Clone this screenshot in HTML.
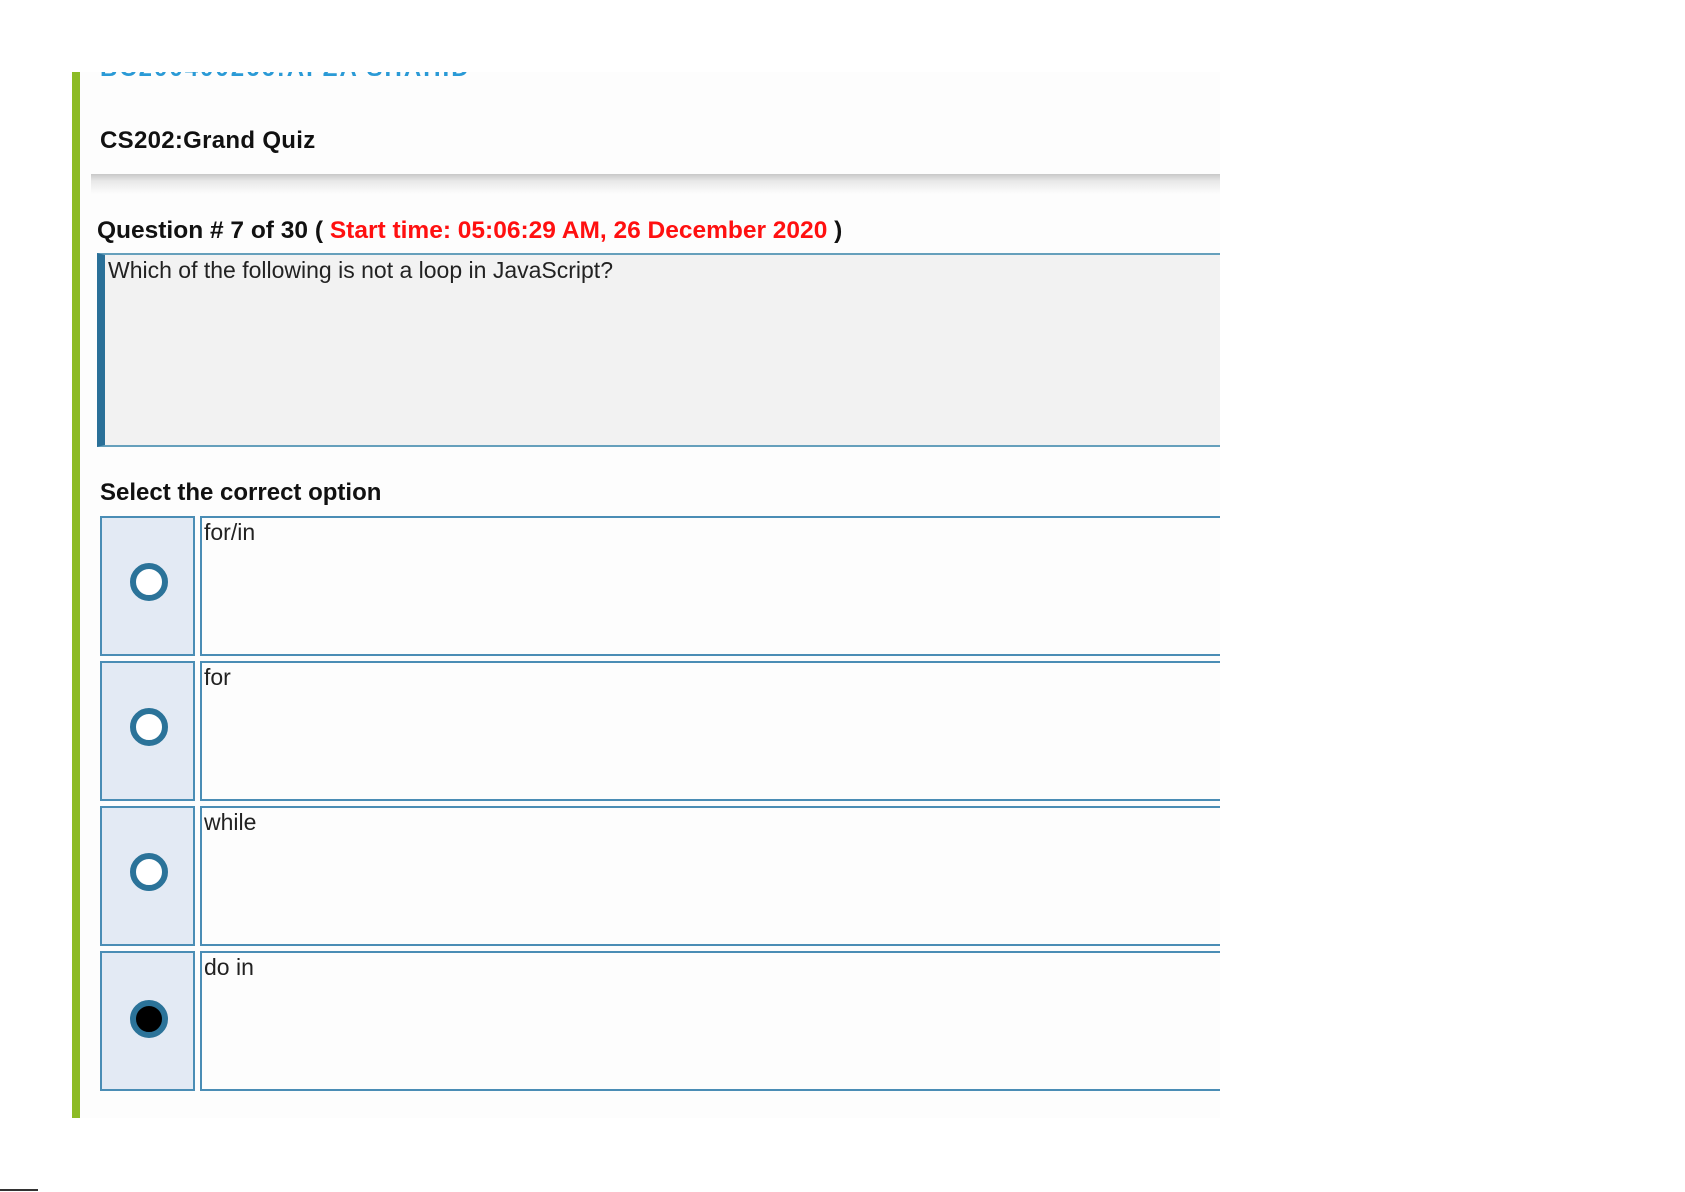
<!DOCTYPE html>
<html><head><meta charset="utf-8"><style>
*{margin:0;padding:0;box-sizing:border-box}
body{width:1685px;height:1192px;background:#fff;position:relative;overflow:hidden;font-family:"Liberation Sans",Arial,sans-serif}
.a{position:absolute}
.green{left:72px;top:72px;width:8px;height:1046px;background:#8cbb25}
.content{left:80px;top:72px;width:1140px;height:1046px;background:#fdfdfd}
.clip{left:100px;top:72px;width:420px;height:6px;overflow:hidden}
.clip span{position:absolute;top:-17px;left:0;font-size:24px;font-weight:bold;color:#2a9ad6;white-space:nowrap;letter-spacing:2px}
.title{left:100px;top:127px;font-size:24px;font-weight:bold;color:#111;letter-spacing:0.3px}
.shadow{left:91px;top:174px;width:1129px;height:20px;background:linear-gradient(#c8c8c8,#e8e8e8 35%,#fdfdfd)}
.qline{left:97px;top:217px;font-size:24.5px;font-weight:bold;color:#111;white-space:nowrap}
.qline .r{color:#ff1010}
.qbox{left:97px;top:253px;width:1123px;height:194px;background:#f2f2f2;border-top:2px solid #66a0bc;border-bottom:2px solid #66a0bc;border-left:8px solid #2a7098}
.qbox span{position:absolute;left:3px;top:2px;font-size:23px;color:#222}
.sel{left:100px;top:479px;font-size:24px;font-weight:bold;color:#111}
.rc{left:100px;width:95px;height:140px;background:#e3eaf4;border:2px solid #4a8db5}
.tc{left:200px;width:1020px;height:140px;background:#fdfdfd;border:2px solid #4a8db5;border-right:none}
.tc span{position:absolute;left:2px;top:1px;font-size:23px;color:#222}
.rad{position:absolute;left:28px;top:45px;width:38px;height:38px;border-radius:50%;border:6px solid #2b7399;background:#fff}
.rad.on{background:#000}
</style></head><body>
<div class="a green"></div>
<div class="a content"></div>
<div class="a clip"><span>BC200400266:AFZA SHAHID</span></div>
<div class="a title">CS202:Grand Quiz</div>
<div class="a shadow"></div>
<div class="a qline">Question # 7 of 30 ( <span class="r">Start time: 05:06:29 AM, 26 December 2020</span> )</div>
<div class="a qbox"><span>Which of the following is not a loop in JavaScript?</span></div>
<div class="a sel">Select the correct option</div>

<div class="a rc" style="top:516px"><div class="rad"></div></div>
<div class="a tc" style="top:516px"><span>for/in</span></div>
<div class="a rc" style="top:661px"><div class="rad"></div></div>
<div class="a tc" style="top:661px"><span>for</span></div>
<div class="a rc" style="top:806px"><div class="rad"></div></div>
<div class="a tc" style="top:806px"><span>while</span></div>
<div class="a rc" style="top:951px"><div class="rad on" style="top:47px"></div></div>
<div class="a tc" style="top:951px"><span>do in</span></div>
<div class="a" style="left:0;top:1189px;width:38px;height:2px;background:#333"></div>
</body></html>
